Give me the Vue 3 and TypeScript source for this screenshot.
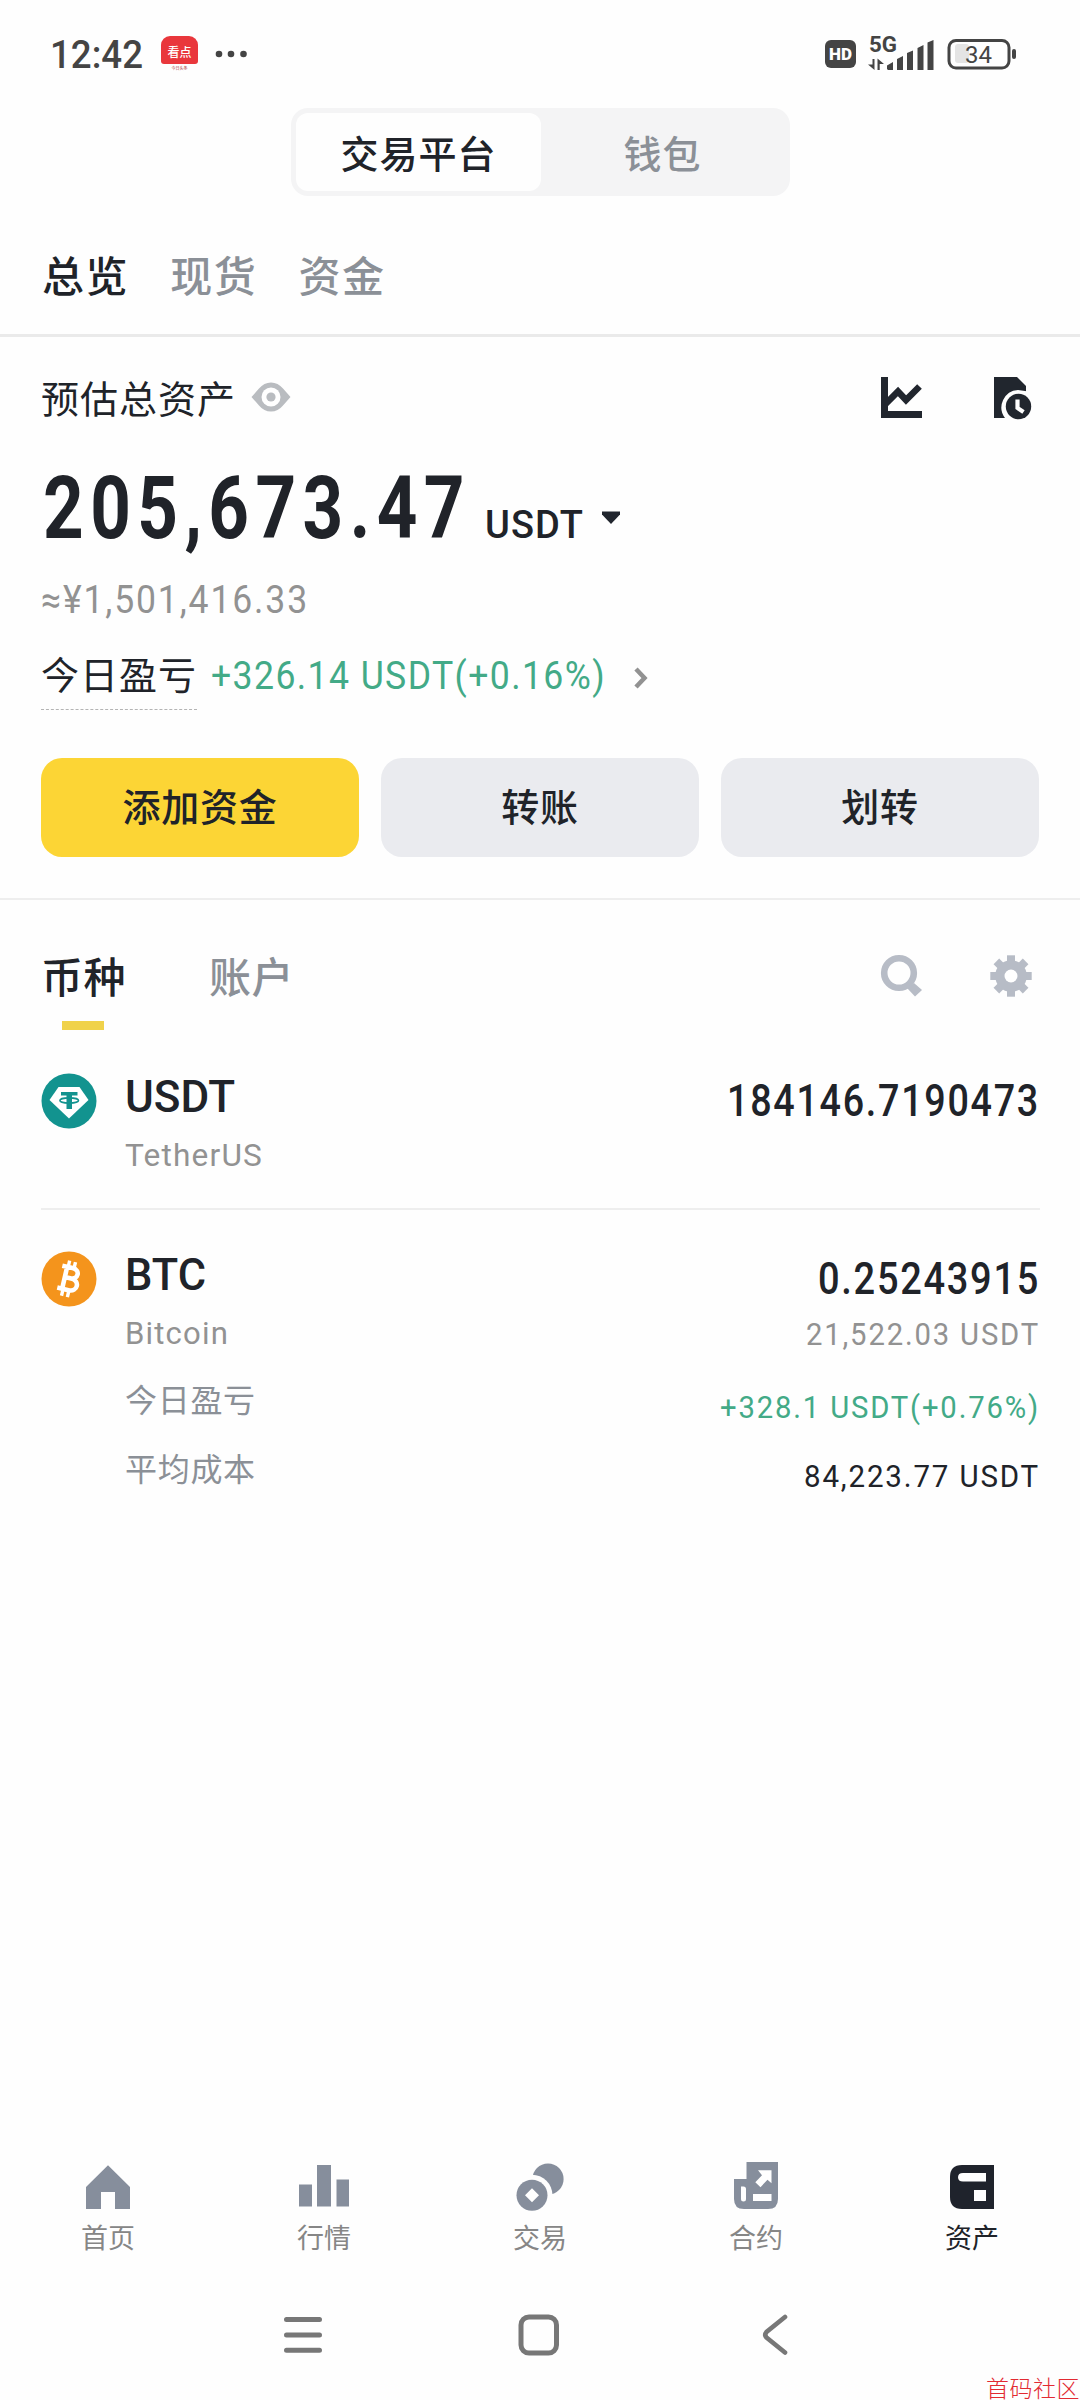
<script setup lang="ts">
import { ref } from 'vue'

interface Detail { label: string; value: string; width: number; up: boolean }
interface Coin {
  id: 'usdt' | 'btc'
  symbol: string
  symbolWidth: number
  name: string
  nameWidth: number
  amount: string
  amountWidth: number
  worth?: string
  details: Detail[]
}

// Condenses or widens a single-line text so that it fills the given width.
const vFit = {
  mounted(el: HTMLElement, binding: { value: number }) {
    const natural = el.getBoundingClientRect().width
    el.style.width = `${binding.value}px`
    el.style.transform = `scaleX(${binding.value / natural})`
  },
}

const accountTabs = ['总览', '现货', '资金']
const activeAccountTab = ref('总览')
const listTabs = ['币种', '账户']
const activeListTab = ref('币种')

const actions = [
  { label: '添加资金', primary: true },
  { label: '转账', primary: false },
  { label: '划转', primary: false },
]

const coins: Coin[] = [
  {
    id: 'usdt', symbol: 'USDT', symbolWidth: 110, name: 'TetherUS', nameWidth: 138,
    amount: '184146.7190473', amountWidth: 313, details: [],
  },
  {
    id: 'btc', symbol: 'BTC', symbolWidth: 81, name: 'Bitcoin', nameWidth: 104,
    amount: '0.25243915', amountWidth: 222, worth: '21,522.03 USDT',
    details: [
      { label: '今日盈亏', value: '+328.1 USDT(+0.76%)', width: 320, up: true },
      { label: '平均成本', value: '84,223.77 USDT', width: 236, up: false },
    ],
  },
]

const navItems = [
  { id: 'home', label: '首页' },
  { id: 'market', label: '行情' },
  { id: 'trade', label: '交易' },
  { id: 'futures', label: '合约' },
  { id: 'assets', label: '资产' },
]
const activeNav = ref('assets')
const gearAngles = [0, 45, 90, 135, 180, 225, 270, 315]
</script>

<template>
  <div class="screen">
    <header class="status">
      <div class="status-left">
        <span v-fit="93" class="num clock">12:42</span>
        <div class="app-badge">
          <div class="app-badge-top">看点</div>
          <div class="app-badge-sub">今日头条</div>
        </div>
        <svg class="dots" width="32" height="8" viewBox="0 0 32 8" fill="#444">
          <circle cx="4" cy="4" r="3.3" /><circle cx="16" cy="4" r="3.3" /><circle cx="28.5" cy="4" r="3.3" />
        </svg>
      </div>
      <div class="status-right">
        <div class="hd">HD</div>
        <svg class="signal" width="68" height="36" viewBox="0 0 68 36" fill="#444">
          <text x="1" y="16" class="signal-text" textLength="28" lengthAdjust="spacingAndGlyphs">5G</text>
          <path d="M4.500 23h2v11l-6.500-5.500h4.500zM9.500 34V22.500l6.500 5.500h-4.300v6z" />
          <path d="M19 33v-3.500l6-3.500v8h-5zM29 34v-11l6-3v14zM39 34V17l6-2.500V34zM49.500 34V12l6-3v25zM59.500 34V6.500L65.500 4v30z" />
        </svg>
        <svg class="battery" width="71" height="32" viewBox="0 0 71 32">
          <rect x="8" y="6" width="14" height="19" rx="3" fill="#e4e4e4" />
          <rect x="2" y="2.500" width="60" height="27.500" rx="7" fill="none" stroke="#444" stroke-width="3" />
          <rect x="65" y="11" width="4" height="10" rx="2" fill="#444" />
          <text x="18" y="25" class="battery-text" textLength="27" lengthAdjust="spacingAndGlyphs">34</text>
        </svg>
      </div>
    </header>

    <div class="segment">
      <div class="segment-item on">交易平台</div>
      <div class="segment-item">钱包</div>
    </div>

    <nav class="account-tabs">
      <span v-for="t in accountTabs" :key="t" :class="{ on: t === activeAccountTab }" @click="activeAccountTab = t">{{ t }}</span>
    </nav>

    <section class="overview">
      <div class="overview-head">
        <span class="cjk">预估总资产</span>
        <svg class="eye" width="40" height="30" viewBox="0 0 40 30">
          <path d="M.5 15Q4 11 8 6.500Q13 .5 20 .5T32 6.500Q36 11 39.500 15Q36 19 32 23.500Q27 29.500 20 29.500T8 23.500Q4 19 .5 15z" fill="#b9bcc0" />
          <circle cx="20" cy="15" r="9.500" fill="#fff" /><circle cx="20" cy="15" r="4.600" fill="#b9bcc0" />
        </svg>
        <svg class="chart" width="42" height="42" viewBox="0 0 42 42">
          <path d="M0 0h7v34h34v7H0z" fill="#21262e" />
          <path d="M3.500 28L17 14.500l8 8.500L38.500 9.500" fill="none" stroke="#21262e" stroke-width="6.600" />
        </svg>
        <svg class="history" width="38" height="42" viewBox="0 0 38 42">
          <path d="M0 0h23l9 9v32H0z" fill="#21262e" />
          <path d="M24 13a17.500 17.500 0 0 0-13 28h27V15z" fill="#fefefe" />
          <circle cx="24.500" cy="29.500" r="12.700" fill="#21262e" />
          <path d="M23.500 22.500v8.500l6 4" fill="none" stroke="#fff" stroke-width="4.200" />
        </svg>
      </div>

      <div class="balance">
        <span v-fit="428" class="num total">205,673.47</span>
        <span v-fit="99" class="num unit">USDT</span>
        <svg class="caret" width="18" height="13" viewBox="0 0 18 13"><path d="M0 .5h18v3L9 13 0 3.500z" fill="#21262e" /></svg>
      </div>

      <div class="fiat"><span v-fit="268" class="num">≈¥1,501,416.33</span></div>

      <div class="pnl">
        <span class="pnl-label">今日盈亏</span>
        <span v-fit="395" class="num pnl-value">+326.14 USDT(+0.16%)</span>
        <svg class="chevron" width="16" height="22" viewBox="0 0 16 22"><path d="M3 2l8.500 9L3 20" fill="none" stroke="#929292" stroke-width="4.500" /></svg>
      </div>

      <div class="actions">
        <button v-for="a in actions" :key="a.label" :class="{ primary: a.primary }">{{ a.label }}</button>
      </div>
    </section>

    <nav class="list-tabs">
      <span v-for="t in listTabs" :key="t" :class="{ on: t === activeListTab }" @click="activeListTab = t">{{ t }}</span>
      <svg class="search" width="42" height="42" viewBox="0 0 42 42">
        <circle cx="18" cy="18" r="14.800" fill="none" stroke="#b7bcc6" stroke-width="6.600" />
        <path d="M33 28l8 7-7 6.500L26 33z" fill="#b7bcc6" />
      </svg>
      <svg class="gear" width="42" height="42" viewBox="0 0 42 42" fill="#b7bcc6">
        <rect v-for="a in gearAngles" :key="a" x="17" y=".3" width="8" height="9" :transform="`rotate(${a} 21 21)`" />
        <circle cx="21" cy="21" r="15.800" /><circle cx="21" cy="21" r="6.500" fill="#fff" />
      </svg>
    </nav>

    <main class="coins">
      <article v-for="c in coins" :key="c.id" class="coin" :class="c.id">
        <svg v-if="c.id === 'usdt'" class="coin-icon" width="56" height="56" viewBox="0 0 56 56">
          <circle cx="28" cy="28" r="27.500" fill="#12938f" />
          <path d="M17.500 14h21l9 13L28 45.500 8.500 27z" fill="#fff" />
          <path d="M20 19h16.500v3.500H31V36h-5.500V22.500H20z" fill="#12938f" />
          <ellipse cx="28.200" cy="27.500" rx="9.300" ry="2.600" fill="none" stroke="#12938f" stroke-width="1.600" />
        </svg>
        <svg v-else class="coin-icon" width="56" height="56" viewBox="0 0 56 56">
          <circle cx="28" cy="28" r="27.500" fill="#f4941c" />
          <g transform="rotate(13 28 28)" fill="none" stroke="#fff">
            <path d="M18.500 16.500H29c8.500 0 8.500 10.500 0 10.500h-5.500H30c9.500 0 9.500 12 0 12H18.500M23.500 16.500v22.500" stroke-width="4.600" />
            <path d="M24.500 15v-5M30.500 15v-5M24.500 46v-6M30.500 46v-6" stroke-width="3.400" />
          </g>
        </svg>
        <div class="coin-left">
          <div class="symbol"><span v-fit="c.symbolWidth" class="num">{{ c.symbol }}</span></div>
          <div class="name"><span v-fit="c.nameWidth" class="num">{{ c.name }}</span></div>
          <div v-for="d in c.details" :key="d.label" class="detail-label">{{ d.label }}</div>
        </div>
        <div class="coin-right">
          <div class="amount"><span v-fit="c.amountWidth" class="num">{{ c.amount }}</span></div>
          <div v-if="c.worth" class="worth"><span v-fit="234" class="num">{{ c.worth }}</span></div>
          <div v-for="d in c.details" :key="d.label" class="detail-value" :class="{ up: d.up }">
            <span v-fit="d.width" class="num">{{ d.value }}</span>
          </div>
        </div>
      </article>
    </main>

    <nav class="bottom-nav">
      <div v-for="n in navItems" :key="n.id" class="nav-item" :class="{ on: n.id === activeNav }" @click="activeNav = n.id">
        <svg width="48" height="48" viewBox="0 0 48 48" fill="currentColor">
          <path v-if="n.id === 'home'" d="M24 2.300L46 24v22H31V29H17v17H2V24z" />
          <path v-else-if="n.id === 'market'" d="M-1 21.500h13V43.500H-1zM17 2h14v41.500H17zM36.500 16.500H49v27H36.500z" />
          <template v-else-if="n.id === 'trade'">
            <circle cx="32" cy="16" r="15.600" />
            <circle cx="16" cy="32.300" r="20.500" fill="#fefefe" />
            <circle cx="16" cy="32.300" r="15.500" />
            <path d="M16 25.300l7 7-7 7-7-7z" fill="#fff" />
          </template>
          <template v-else-if="n.id === 'futures'">
            <path d="M2 16h12.500V-1H46v37q0 10-10 10H12Q2 46 2 36z" />
            <path d="M9 23.500h2.500q2.500 0 2.500 2.500v10q0 2.500-2.500 2.500T9 36zM21 31h18.500v7H21zM26 7.300h13.500v13l-4-3.600-7 7.500-5.200-5 6.700-6.900z" fill="#fff" />
          </template>
          <template v-else>
            <path d="M14 2h32v44H14Q2 46 2 34V14Q2 2 14 2z" />
            <path d="M15 10h23v8.500H15Q10 18.500 10 14.300T15 10zM26 27h12v11H26z" fill="#fff" />
          </template>
        </svg>
        <span>{{ n.label }}</span>
      </div>
    </nav>

    <footer class="system-nav">
      <svg width="40" height="44" viewBox="0 0 40 44" stroke="#777" stroke-width="5" stroke-linecap="round">
        <path d="M3.500 6.500h33M3.500 22h33M3.500 37.300h33" />
      </svg>
      <svg width="44" height="44" viewBox="0 0 44 44" fill="none" stroke="#777" stroke-width="5">
        <rect x="4" y="4" width="35.500" height="36" rx="8" />
      </svg>
      <svg width="28" height="44" viewBox="0 0 28 44" fill="none" stroke="#777" stroke-width="4.600" stroke-linecap="round">
        <path d="M24 4L5.500 19Q3 22 5.500 24.500L24 39.500" />
      </svg>
    </footer>
    <div class="watermark">首码社区</div>
  </div>
</template>

<style>
body {
  background: #fefefe;
}
</style>

<style scoped>
.screen {
  position: relative;
  display: flex;
  flex-direction: column;
  box-sizing: border-box;
  width: 1080px;
  height: 2400px;
  overflow: hidden;
  background: #fefefe;
  color: #202329;
  font-family: "Noto Sans CJK SC", sans-serif;
}
.num {
  display: inline-block;
  flex: none;
  font-family: Roboto, "Noto Sans CJK SC", sans-serif;
  text-align: left;
  white-space: nowrap;
  transform-origin: 0 50%;
}
svg {
  flex: none;
  overflow: visible;
}

.status {
  display: flex;
  justify-content: space-between;
  align-items: center;
  height: 108px;
  padding: 0 62px 0 50px;
}
.status-left,
.status-right {
  display: flex;
  align-items: center;
}
.clock {
  font-size: 39px;
  font-weight: 500;
  line-height: 44px;
  padding-top: 1px;
  color: #444;
}
.app-badge {
  width: 37px;
  height: 36px;
  margin-left: 18px;
  text-align: center;
}
.app-badge-top {
  height: 28px;
  border-radius: 9px 9px 3px 3px;
  background: #e9373c;
  color: #fff;
  font-size: 12px;
  font-weight: 500;
  line-height: 31px;
}
.app-badge-sub {
  height: 8px;
  font-size: 4px;
  line-height: 8px;
  color: #a33;
}
.dots {
  margin-left: 17px;
}
.hd {
  width: 31px;
  height: 28px;
  border-radius: 6px;
  background: #444;
  color: #fff;
  font: 900 17px/29px Roboto, sans-serif;
  text-align: center;
}
.signal {
  margin-left: 12px;
}
.signal-text {
  font: 700 22px Roboto, sans-serif;
}
.battery {
  margin-left: 11px;
}
.battery-text {
  font: 400 24px Roboto, sans-serif;
  fill: #444;
}

.segment {
  display: flex;
  box-sizing: border-box;
  align-self: center;
  width: 499px;
  height: 88px;
  padding: 5px;
  border-radius: 17px;
  background: #f4f4f5;
}
.segment-item {
  flex: 1;
  border-radius: 12px;
  color: #8b9097;
  font-size: 38px;
  font-weight: 500;
  letter-spacing: 1px;
  line-height: 78px;
  text-align: center;
}
.segment-item.on {
  padding-left: 1px;
  background: #fefefe;
  color: #202329;
}

.account-tabs {
  display: flex;
  gap: 41px;
  height: 116px;
  padding: 22px 0 0 42px;
  border-bottom: 3px solid #eaeaea;
  font-size: 42px;
  font-weight: 500;
  letter-spacing: 1.600px;
  line-height: 112px;
  color: #8b9097;
}
.on {
  color: #202329;
}

.overview {
  padding: 0 41px 41px;
  border-bottom: 2px solid #eeeeee;
}
.overview-head {
  display: flex;
  align-items: center;
  height: 122px;
  font-size: 38px;
  letter-spacing: 1px;
}
.overview-head .cjk {
  line-height: 118px;
  padding-bottom: 3px;
}
.eye {
  margin: 0 0 2px 15px;
}
.chart {
  margin-left: auto;
}
.history {
  margin: 0 7px 0 71px;
}
.balance {
  display: flex;
  align-items: baseline;
  height: 92px;
  padding: 2px 0 0 2px;
}
.total {
  font-size: 88px;
  font-weight: 700;
  line-height: 94px;
  letter-spacing: 8px;
}
.unit {
  margin-left: 14px;
  font-size: 38px;
  font-weight: 500;
  letter-spacing: 1px;
}
.caret {
  padding-bottom: 14px;
  margin-left: 18px;
}
.fiat {
  height: 95px;
  color: #929292;
  font: 400 38px/95px Roboto, sans-serif;
  letter-spacing: 2px;
}
.pnl {
  display: flex;
  height: 63px;
}
.pnl-label {
  width: 156px;
  height: 61px;
  border-bottom: 1px dashed #b4b4b4;
  font-size: 38px;
  letter-spacing: 1px;
  line-height: 49px;
  white-space: nowrap;
}
.pnl-value {
  margin-left: 14px;
  color: #43aa87;
  font-size: 38px;
  letter-spacing: 1.500px;
  line-height: 57px;
}
.chevron {
  margin: 19px 0 0 27px;
}
.actions {
  display: flex;
  gap: 22px;
  margin-top: 47px;
}
button {
  flex: 1;
  height: 99px;
  padding: 0 0 5px;
  border: 0;
  border-radius: 21px;
  background: #eaebef;
  color: #202329;
  font: 500 38px/94px "Noto Sans CJK SC", sans-serif;
  letter-spacing: 0.800px;
}
button.primary {
  background: #fcd535;
}

.list-tabs {
  display: flex;
  align-items: center;
  height: 152px;
  padding: 0 48px 0 41px;
  font-size: 42px;
  font-weight: 500;
  letter-spacing: 0.500px;
  line-height: 146px;
  color: #8b9097;
}
.list-tabs span {
  position: relative;
  top: -1px;
  width: 85px;
  margin-right: 83px;
  white-space: nowrap;
}
.list-tabs .on::after {
  content: "";
  position: absolute;
  left: 21px;
  bottom: 18px;
  width: 42px;
  height: 9px;
  background: #f0d24a;
}
.search {
  margin-left: auto;
}
.gear {
  margin-left: 67px;
}

.coins {
  padding: 0 40px 0 41px;
}
.coin {
  display: flex;
}
.coin.usdt {
  padding: 21px 0 18px;
  border-bottom: 2px solid #eeeeee;
}
.coin.btc {
  padding-top: 41px;
}
.coin-left {
  margin-left: 28px;
}
.coin-right {
  margin-left: auto;
  text-align: right;
}
.symbol,
.name,
.amount,
.worth,
.detail-value {
  font-family: Roboto, sans-serif;
}
.symbol {
  height: 48px;
  font-size: 45px;
  font-weight: 500;
  line-height: 48px;
}
.name {
  height: 69px;
  color: #929292;
  font-size: 32px;
  letter-spacing: 1.200px;
  line-height: 69px;
}
.detail-label {
  height: 65px;
  color: #8b9097;
  font-size: 32px;
  letter-spacing: 0.700px;
  line-height: 61px;
}
.detail-label + .detail-label {
  line-height: 69px;
}
.amount {
  height: 56px;
  font-size: 44px;
  font-weight: 500;
  letter-spacing: 2px;
  line-height: 56px;
}
.worth {
  height: 55px;
  color: #929292;
  font-size: 32px;
  letter-spacing: 2px;
  line-height: 55px;
}
.detail-value {
  height: 47px;
  font-size: 32px;
  letter-spacing: 2px;
  line-height: 47px;
}
.detail-value.up {
  height: 91px;
  color: #43aa87;
  line-height: 91px;
}

.bottom-nav {
  display: flex;
  margin-top: auto;
}
.nav-item {
  display: flex;
  flex: 1;
  flex-direction: column;
  align-items: center;
  color: #868e9c;
}
.nav-item.on {
  color: #1f232c;
}
.nav-item span {
  color: #868686;
  font-size: 27px;
  line-height: 52px;
  height: 54px;
}
.nav-item.on span {
  color: #202329;
}
.system-nav {
  display: flex;
  box-sizing: border-box;
  flex: none;
  align-items: center;
  height: 135px;
  padding: 5px 0 0 283px;
}
.system-nav svg:nth-child(2) {
  margin-left: 194px;
}
.system-nav svg:nth-child(3) {
  margin-left: 200px;
}
.watermark {
  position: absolute;
  right: 0;
  bottom: 0;
  color: #e22a32;
  font-size: 23px;
  font-weight: 300;
  line-height: 26px;
  letter-spacing: 0.500px;
}
</style>
